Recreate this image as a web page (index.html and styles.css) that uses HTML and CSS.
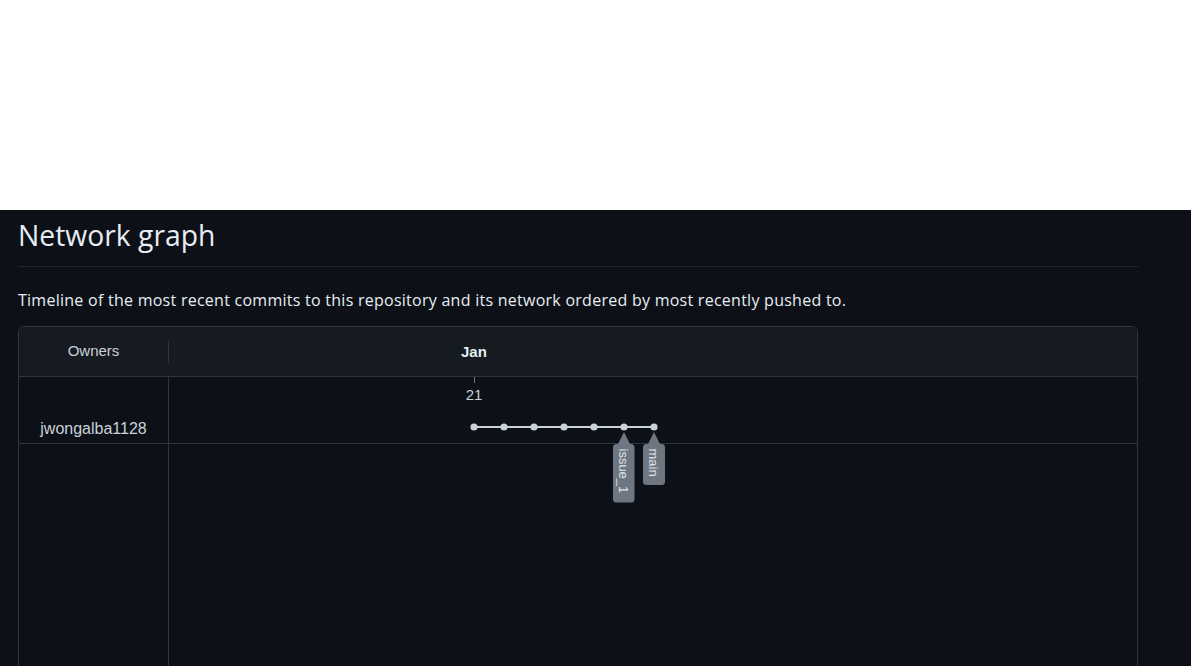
FILE: index.html
```html
<!DOCTYPE html>
<html lang="en">
<head>
<meta charset="utf-8">
<title>Network graph</title>
<link rel="stylesheet" href="styles.css">
</head>
<body>
<div class="topbar"></div>
<main class="page">
  <h2 class="subhead">Network graph</h2>
  <p class="desc">Timeline of the most recent commits to this repository and its network ordered by most recently pushed to.</p>
  <div class="network">
    <div class="head-owners"><span>Owners</span></div>
    <div class="head-months"><span class="month">Jan</span></div>
    <div class="owners-col">
      <div class="owner-row">jwongalba1128</div>
    </div>
    <div class="graph-col">
      <div class="graph-row"></div>
      <svg class="graph" width="968" height="300" viewBox="169 377 968 300" xmlns="http://www.w3.org/2000/svg">
        <line x1="474.5" y1="377" x2="474.5" y2="383" stroke="#6e7681" stroke-width="1"/>
        <text x="474" y="400" class="day">21</text>
        <line x1="474" y1="427" x2="654" y2="427" stroke="#c9d1d9" stroke-width="2"/>
        <g fill="#c9d1d9">
          <circle cx="474" cy="427" r="3.6"/>
          <circle cx="504" cy="427" r="3.6"/>
          <circle cx="534" cy="427" r="3.6"/>
          <circle cx="564" cy="427" r="3.6"/>
          <circle cx="594" cy="427" r="3.6"/>
          <circle cx="624" cy="427" r="3.6"/>
          <circle cx="654" cy="427" r="3.6"/>
        </g>
        <g fill="#6e7681">
          <path d="M624 432 L630 444 L631 444 Q634.5 444 634.5 447.5 L634.5 499 Q634.5 502.5 631 502.5 L616.5 502.5 Q613 502.5 613 499 L613 447.5 Q613 444 616.5 444 L618 444 Z"/>
          <path d="M654 432 L660 444 L661.5 444 Q665 444 665 447.5 L665 481.5 Q665 485 661.5 485 L646.5 485 Q643 485 643 481.5 L643 447.5 Q643 444 646.5 444 L648 444 Z"/>
        </g>
        <text class="tag" transform="translate(619 448.5) rotate(90)">issue_1</text>
        <text class="tag" transform="translate(649 448.5) rotate(90)">main</text>
      </svg>
    </div>
  </div>
</main>
</body>
</html>
```
FILE: styles.css
```css
html, body {
  margin: 0;
  padding: 0;
}
body {
  background: #0d1117;
  font-family: "Open Sans", "Noto Sans", sans-serif;
  color: #e6edf3;
  overflow: hidden;
  height: 666px;
}
.topbar {
  height: 210px;
  background: #ffffff;
}
.page {
  width: 1120px;
  padding: 7px 0 0 18px;
}
.subhead {
  margin: 0;
  font-size: 28.3px;
  font-weight: 400;
  line-height: 37px;
  color: #e6edf3;
  padding-bottom: 12px;
  border-bottom: 1px solid #21262d;
  letter-spacing: 0;
}
.desc {
  margin: 21px 0 14px;
  font-size: 16px;
  line-height: 24px;
  color: #e6edf3;
  letter-spacing: 0.26px;
}
.network {
  display: grid;
  grid-template-columns: 150px 1fr;
  grid-template-rows: 50px 400px;
  border: 1px solid #30363d;
  border-radius: 6px;
  font-family: "Liberation Sans", Arial, sans-serif;
  font-size: 15px;
  color: #c9d1d9;
  overflow: hidden;
}
.head-owners {
  background: #161b22;
  border-bottom: 1px solid #30363d;
  display: flex;
  align-items: center;
  justify-content: center;
  position: relative;
  padding-right: 1px;
  padding-bottom: 2px;
}
.head-owners::after {
  content: "";
  position: absolute;
  right: 0;
  top: 14px;
  height: 22px;
  width: 1px;
  background: #30363d;
}
.head-months {
  background: #161b22;
  border-bottom: 1px solid #30363d;
  display: flex;
  align-items: center;
  padding-left: 292px;
}
.month {
  font-weight: 700;
  color: #e6edf3;
}
.owners-col {
  border-right: 1px solid #30363d;
}
.owner-row {
  height: 67px;
  border-bottom: 1px solid #30363d;
  display: flex;
  align-items: flex-end;
  justify-content: center;
  padding-bottom: 5px;
  box-sizing: border-box;
  font-size: 16px;
  color: #c9d1d9;
}
.graph-col {
  position: relative;
}
.graph-row {
  height: 67px;
  border-bottom: 1px solid #30363d;
  box-sizing: border-box;
}
.graph {
  position: absolute;
  left: 0;
  top: 0;
}
.day {
  font-family: "Liberation Sans", Arial, sans-serif;
  font-size: 15px;
  fill: #c9d1d9;
  text-anchor: middle;
}
.tag {
  font-family: "Liberation Sans", Arial, sans-serif;
  font-size: 13px;
  fill: #dfe4ea;
}
```
